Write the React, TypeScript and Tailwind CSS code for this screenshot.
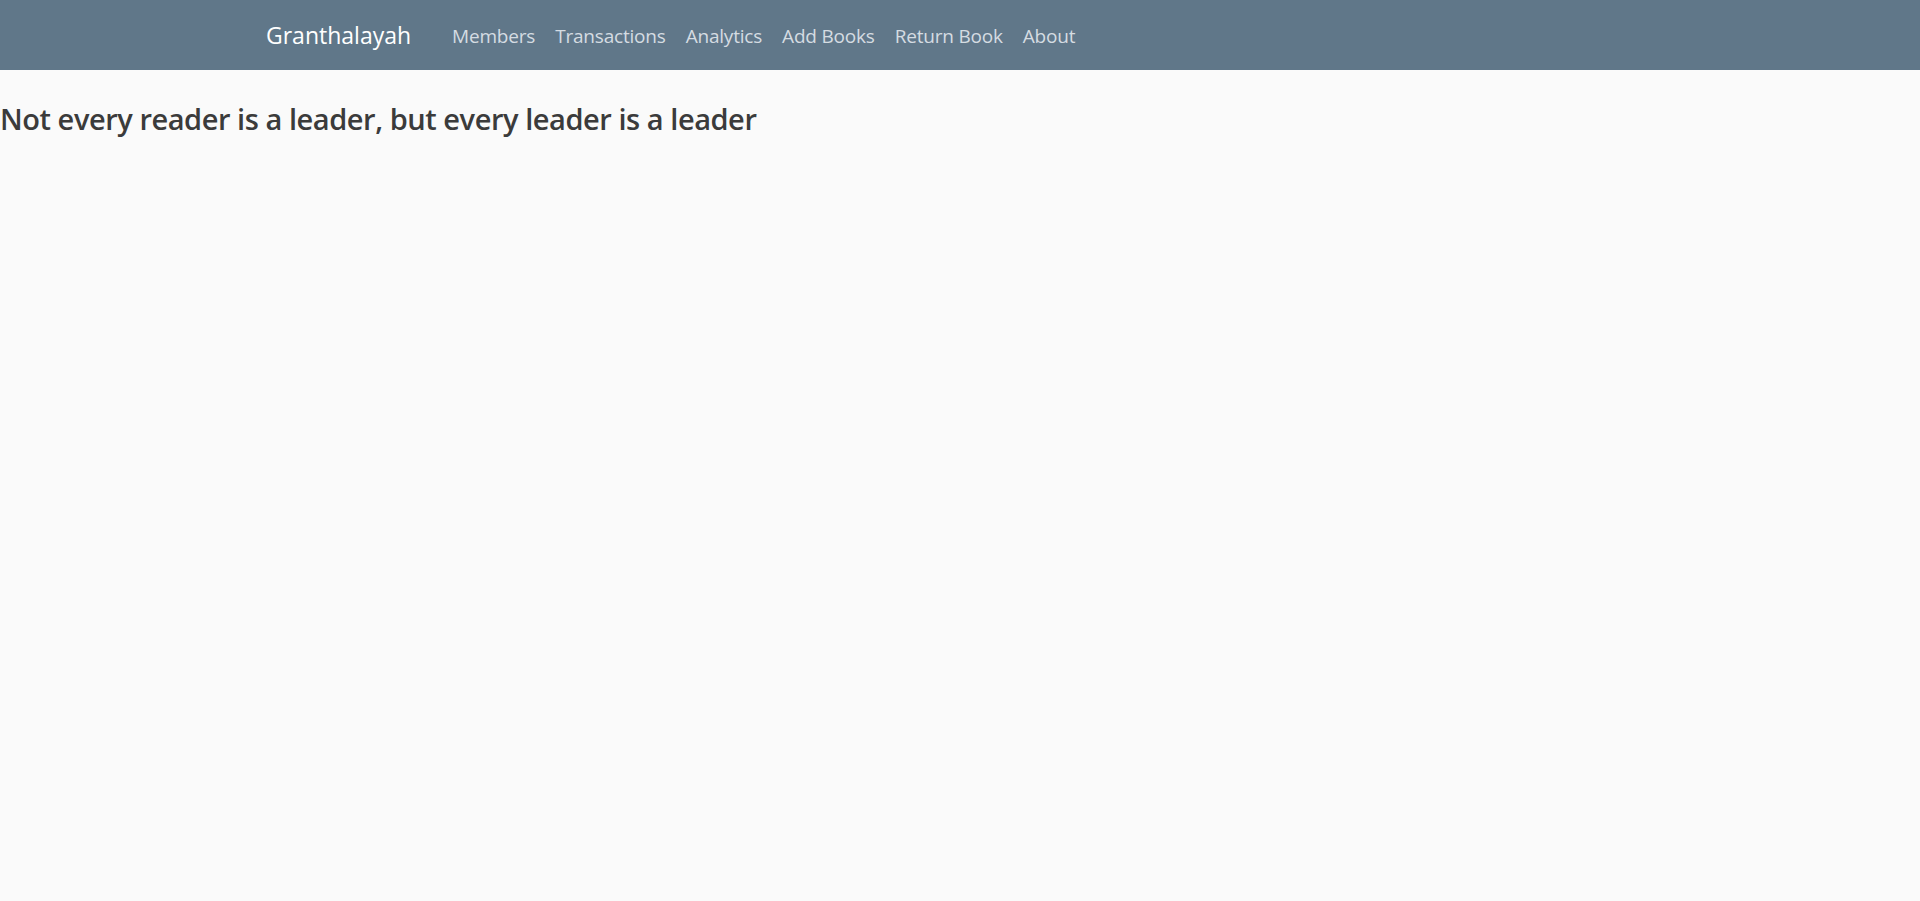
export default function App() {
  const links = ['Members', 'Transactions', 'Analytics', 'Add Books', 'Return Book', 'About'];

  return (
    <div className="min-h-[901px] bg-[#fafafa] font-['Open_Sans',sans-serif]">
      {/* Navbar */}
      <nav className="h-[70px] bg-[#607789] flex items-center pl-[266px]">
        <a href="#" className="text-[23px] leading-[23px] text-white mr-[41px]">
          Granthalayah
        </a>
        <ul className="flex items-center gap-[20px] mt-[3px]">
          {links.map((l) => (
            <li key={l}>
              <a href="#" className="text-[19px] leading-[19px] tracking-[-0.2px] text-[#d5dce2]">
                {l}
              </a>
            </li>
          ))}
        </ul>
      </nav>

      <h2 className="mt-[32px] text-[29px] leading-[1.2] font-semibold tracking-[-0.45px] text-[#3b3b3b]">
        Not every reader is a leader, but every leader is a leader
      </h2>
    </div>
  );
}
